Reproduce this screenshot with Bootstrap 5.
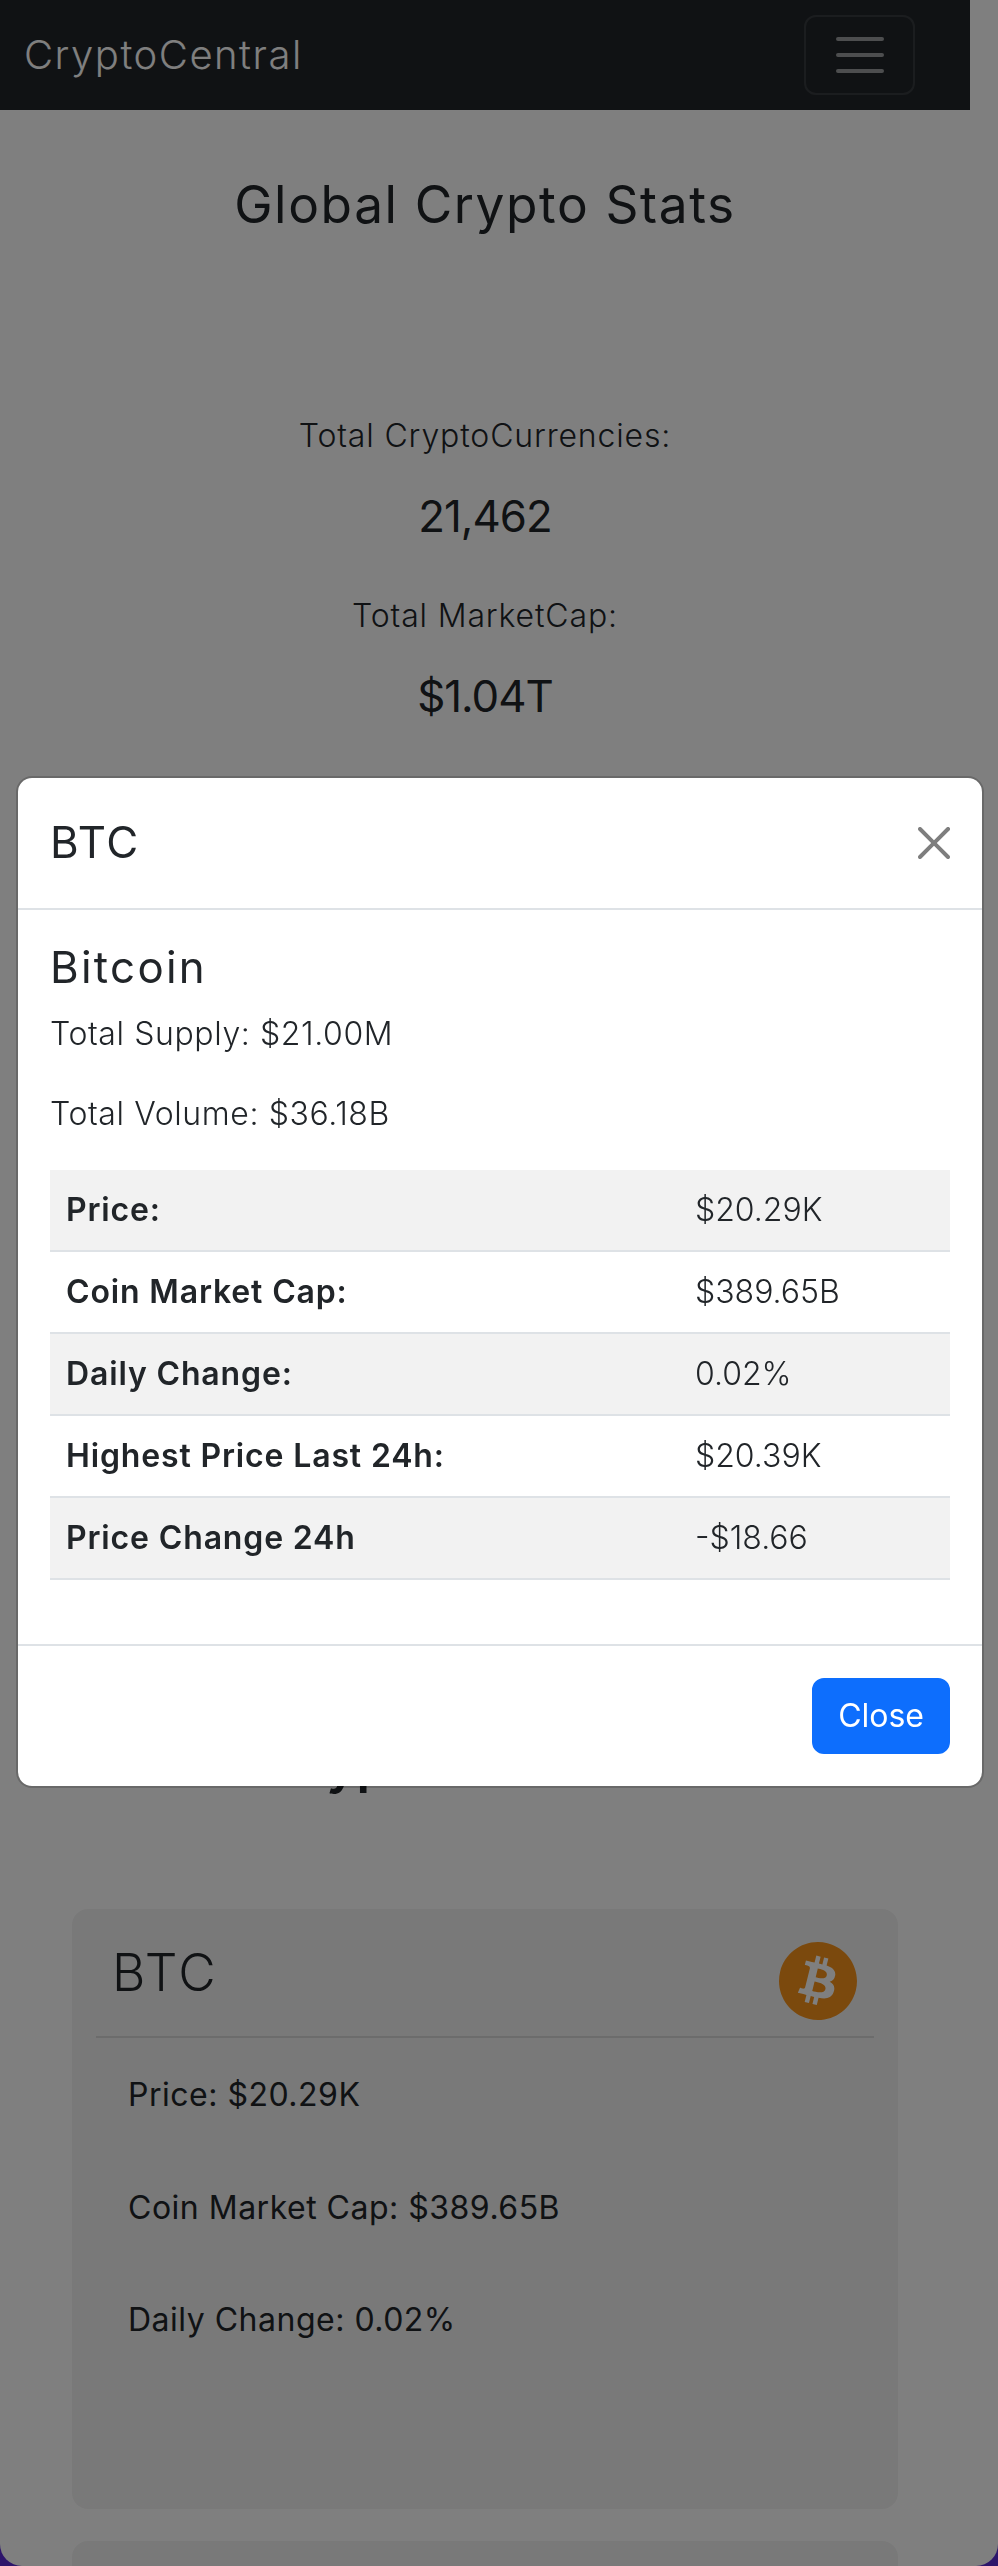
<!DOCTYPE html>
<html lang="en">
<head>
    <meta charset="UTF-8">
    <meta name="viewport" content="width=device-width, initial-scale=1.0">
    <title>CryptoCentral</title>
    <link rel="stylesheet" href="https://cdn.jsdelivr.net/npm/bootstrap@5.3.0/dist/css/bootstrap.min.css">
<style>
        html {
            font-size: 32px;
            background: #5b2bd6;
        }
        :root {
            --bs-border-width: 2px;
        }
        body {
            font-family: "Inter", "Liberation Sans", sans-serif;
            font-weight: 300;
            background: transparent;
            height: 2566px;
            overflow: hidden;
        }
        .page-wrap {
            background: #fff;
            height: 2566px;
            border-radius: 0 0 22px 22px;
            overflow: hidden;
        }
        .page-inner {
            width: 970px;
        }
        .top-nav {
            height: 110px;
            padding: 0 55px 0 24px;
        }
        .top-nav .navbar-brand {
            font-weight: 300;
            letter-spacing: 1.5px;
            margin: 0;
            padding: 0;
        }
        .top-nav .navbar-toggler {
            width: 111px;
            height: 80px;
        }
        .stats-title {
            font-size: 51.4px;
            font-weight: 400;
            letter-spacing: 1.6px;
            margin: 63px 0 0;
            line-height: 62px;
        }
        .stat-label {
            letter-spacing: .85px;
            margin: 0 0 31px;
        }
        .stat-value {
            font-size: 43.8px;
            font-weight: 400;
            letter-spacing: -1px;
            line-height: 52.6px;
            margin: 0 0 48px;
        }
        .stats-block {
            margin-top: 177px;
        }
        .list-title {
            font-size: 51.4px;
            font-weight: 600;
            line-height: 62px;
            margin-top: 1010px;
        }
        .coin-box {
            width: 826px;
            height: 600px;
            margin: 114px auto 32px;
            padding: 24px;
            background: rgba(0, 0, 0, .05);
            border-radius: 16px;
        }
        .coin-box + .coin-box {
            margin-top: 32px;
        }
        .coin-head {
            height: 105px;
            padding: 9px 17px 0 16px;
            border-bottom: 2px solid rgba(0, 0, 0, .1);
        }
        .coin-head h2 {
            font-size: 51.4px;
            font-weight: 300;
            letter-spacing: 2.3px;
            margin: 0;
        }
        .coin-body {
            padding: 33px 32px;
        }
        .coin-body p {
            margin-bottom: 64.5px;
            font-weight: 400;
            letter-spacing: .5px;
        }
        .modal-dialog.wide-dialog {
            max-width: none;
            margin: 0 14px 0 16px;
            min-height: 2564px;
        }
        .modal-content .modal-title {
            font-size: 43.8px;
            font-weight: 400;
            letter-spacing: 1.6px;
            line-height: 1.5;
        }
        .coin-name {
            font-size: 43.8px;
            font-weight: 400;
            letter-spacing: 2.3px;
        }
        .modal-body p {
            letter-spacing: .6px;
        }
        .modal-content th {
            width: 629px;
            font-weight: 600;
            letter-spacing: .85px;
        }
        .modal-content td {
            font-weight: 300;
        }
</style>
</head>
<body>
    <div class="page-wrap">
        <div class="page-inner">
            <nav class="navbar navbar-dark bg-dark top-nav d-flex justify-content-between">
                <a class="navbar-brand" href="#">CryptoCentral</a>
                <button class="navbar-toggler" type="button"><span class="navbar-toggler-icon"></span></button>
            </nav>

            <h2 class="text-center stats-title">Global Crypto Stats</h2>

            <div class="text-center stats-block">
                <p class="stat-label">Total CryptoCurrencies:</p>
                <h4 class="stat-value">21,462</h4>
                <p class="stat-label">Total MarketCap:</p>
                <h4 class="stat-value">$1.04T</h4>
            </div>

            <h2 class="text-center list-title">Cryptocurrencies</h2>

            <div class="coin-box">
                <div class="coin-head d-flex justify-content-between align-items-start">
                    <h2>BTC</h2>
                    <svg width="78" height="78" viewBox="0 0 24 24">
                        <circle cx="12" cy="12" r="8" fill="#fff"/>
                        <path fill="#f7931a" d="M23.638 14.904c-1.602 6.43-8.113 10.34-14.542 8.736C2.67 22.05-1.244 15.525.362 9.105 1.962 2.67 8.475-1.243 14.9.358c6.43 1.605 10.342 8.115 8.738 14.548v-.002zm-6.35-4.613c.24-1.59-.974-2.45-2.64-3.03l.54-2.153-1.315-.33-.525 2.107c-.345-.087-.705-.167-1.064-.25l.526-2.127-1.32-.33-.54 2.165c-.285-.067-.565-.132-.84-.2l-1.815-.45-.35 1.407s.975.225.955.236c.535.136.63.486.615.766l-1.477 5.92c-.075.166-.24.406-.614.314.015.02-.96-.24-.96-.24l-.66 1.51 1.71.426.93.242-.54 2.19 1.32.327.54-2.17c.36.1.705.19 1.05.273l-.51 2.154 1.32.33.545-2.19c2.24.427 3.93.257 4.64-1.774.57-1.637-.03-2.58-1.217-3.196.854-.193 1.5-.76 1.68-1.93h.01zm-3.01 4.22c-.404 1.64-3.157.75-4.05.53l.72-2.9c.896.23 3.757.67 3.33 2.37zm.41-4.24c-.37 1.49-2.662.735-3.405.55l.654-2.64c.744.18 3.137.524 2.75 2.084v.006z"/>
                    </svg>
                </div>
                <div class="coin-body">
                    <p>Price: $20.29K</p>
                    <p>Coin Market Cap: $389.65B</p>
                    <p>Daily Change: 0.02%</p>
                </div>
            </div>

            <div class="coin-box"></div>
        </div>
    </div>

    <div class="modal-backdrop fade show"></div>
    <div class="modal fade show d-block" tabindex="-1">
        <div class="modal-dialog wide-dialog modal-dialog-centered">
            <div class="modal-content">
                <div class="modal-header">
                    <h4 class="modal-title">BTC</h4>
                    <button type="button" class="btn-close" aria-label="Close"></button>
                </div>
                <div class="modal-body">
                    <h4 class="coin-name">Bitcoin</h4>
                    <p>Total Supply: $21.00M</p>
                    <p>Total Volume: $36.18B</p>
                    <table class="table table-striped">
                        <tbody>
                            <tr><th>Price:</th><td>$20.29K</td></tr>
                            <tr><th>Coin Market Cap:</th><td>$389.65B</td></tr>
                            <tr><th>Daily Change:</th><td>0.02%</td></tr>
                            <tr><th>Highest Price Last 24h:</th><td>$20.39K</td></tr>
                            <tr><th>Price Change 24h</th><td>-$18.66</td></tr>
                        </tbody>
                    </table>
                </div>
                <div class="modal-footer">
                    <button type="button" class="btn btn-primary">Close</button>
                </div>
            </div>
        </div>
    </div>

    <script src="https://cdn.jsdelivr.net/npm/bootstrap@5.3.0/dist/js/bootstrap.bundle.min.js"></script>
</body>
</html>
